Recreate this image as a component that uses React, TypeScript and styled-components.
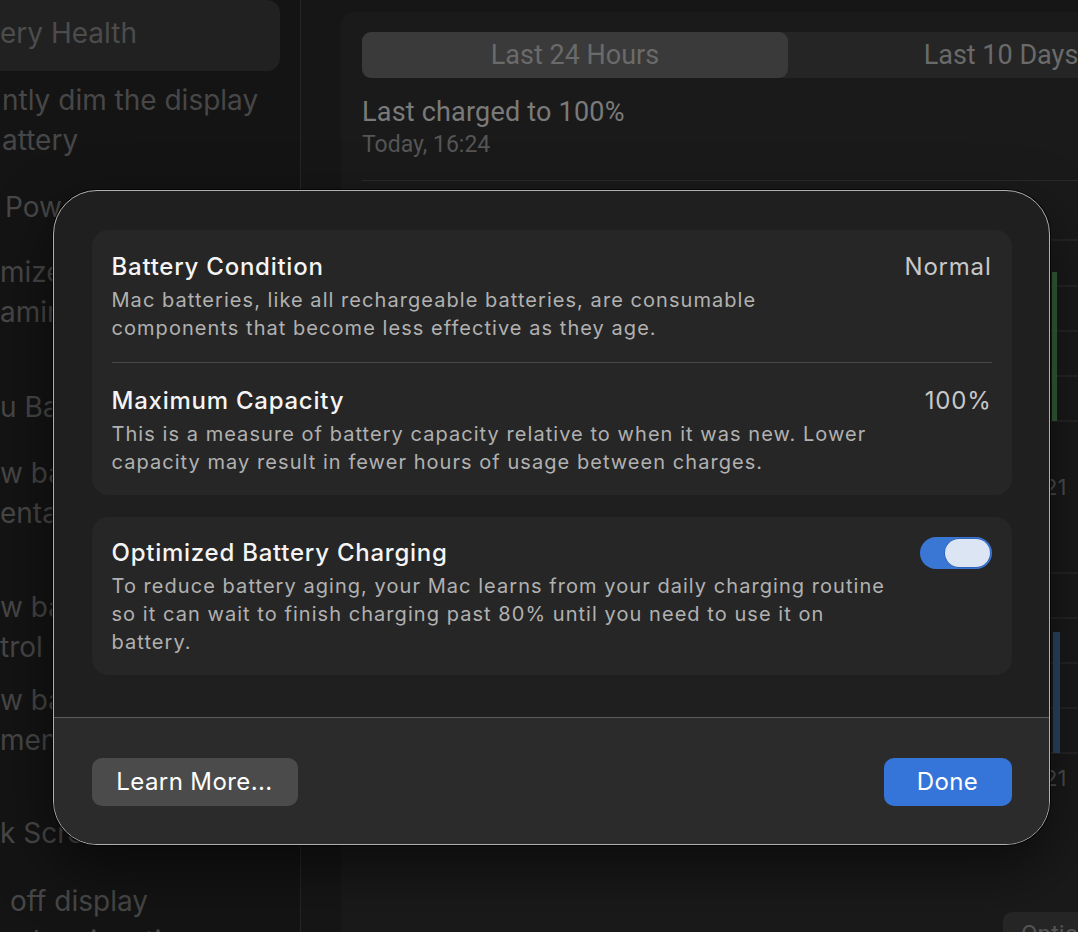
import styled, { createGlobalStyle } from 'styled-components';

const GlobalStyle = createGlobalStyle`
  html, body {
    margin: 0;
    padding: 0;
    background: #161616;
  }
  body {
    font-family: Inter, "Noto Sans", sans-serif;
    -webkit-font-smoothing: antialiased;
  }
`;

const Screen = styled.div`
  position: relative;
  width: 1078px;
  height: 932px;
  overflow: hidden;
  display: flex;
  background: #161616;
`;

/* ---------- dimmed settings window behind the sheet ---------- */

const Sidebar = styled.aside`
  width: 301px;
  flex-shrink: 0;
  box-sizing: border-box;
  padding-right: 20px;
  background: #141414;
  border-right: 1px solid #262626;
  display: flex;
  flex-direction: column;
`;

const SideItem = styled.div<{ $gap: number; $indent?: number; $active?: boolean }>`
  flex-shrink: 0;
  margin-top: ${({ $gap }) => $gap}px;
  padding-left: ${({ $indent }) => $indent ?? 0}px;
  font-size: 28px;
  line-height: 40px;
  color: #474747;
  white-space: nowrap;
  overflow: hidden;
  ${({ $active }) =>
    $active &&
    `
    height: 71px;
    box-sizing: border-box;
    padding-top: 13px;
    background: #212121;
    border-radius: 0 13px 13px 0;
    color: #4c4c4c;
  `}
`;

const Content = styled.main`
  flex: 1;
  min-width: 0;
  padding: 12px 0 0 40px;
  background: #161616;
`;

const Panel = styled.section`
  width: 900px;
  box-sizing: border-box;
  padding: 20px 21px;
  background: #1a1a1a;
  border-radius: 14px;
  font-family: Roboto, "Liberation Sans", sans-serif;
`;

const Segmented = styled.div`
  display: grid;
  grid-template-columns: 1fr 1fr;
  width: 852px;
  height: 46px;
  background: #252525;
  border-radius: 9px;
`;

const Segment = styled.div<{ $active?: boolean }>`
  display: flex;
  align-items: center;
  justify-content: center;
  border-radius: 9px;
  background: ${({ $active }) => ($active ? '#3a3a3a' : 'transparent')};
  color: #6a6a6a;
  font-size: 27px;
`;

const ChargeTitle = styled.div`
  margin-top: 19px;
  font-size: 27px;
  line-height: 30px;
  letter-spacing: 0.2px;
  color: #7a7a7a;
`;

const ChargeTime = styled.div`
  margin-top: 5px;
  font-size: 23px;
  line-height: 26px;
  color: #555555;
`;

const PanelRule = styled.div`
  margin-top: 22px;
  width: 852px;
  height: 1px;
  background: #2a2a2a;
`;

const OptionsButton = styled.div`
  margin: 27px 0 0 641px;
  width: 150px;
  height: 42px;
  padding-left: 18px;
  box-sizing: border-box;
  background: #262626;
  border-radius: 9px;
  color: #555555;
  font-size: 24px;
  line-height: 44px;
`;

/* ---------- battery health sheet ---------- */

const Sheet = styled.div`
  position: absolute;
  left: 53px;
  top: 190px;
  width: 997px;
  box-sizing: border-box;
  background: #1f1f1f;
  border: 1.5px solid #b0b0b0;
  border-radius: 44px;
  overflow: hidden;
  box-shadow: 0 0 0 1px rgba(0, 0, 0, 0.7), 0 24px 60px rgba(0, 0, 0, 0.55);
`;

const SheetBody = styled.div`
  display: flex;
  flex-direction: column;
  gap: 22px;
  padding: 38.5px 37.5px 42px;
`;

const Card = styled.div`
  background: #262626;
  border-radius: 16px;
  padding: 0 20px;
`;

const Row = styled.div<{ $top: number; $bottom: number }>`
  display: flex;
  justify-content: space-between;
  align-items: flex-start;
  gap: 24px;
  padding: ${({ $top, $bottom }) => `${$top}px 0 ${$bottom}px`};
`;

const RowText = styled.div`
  display: flex;
  flex-direction: column;
  gap: 4px;
`;

const Title = styled.div`
  font-size: 24px;
  font-weight: 500;
  line-height: 30px;
  letter-spacing: 0.75px;
  color: #f4f4f4;
`;

const Description = styled.div`
  font-size: 20px;
  line-height: 28px;
  letter-spacing: 1.05px;
  color: #b1b1b1;
  white-space: nowrap;
`;

const Value = styled.div`
  font-size: 24px;
  line-height: 30px;
  letter-spacing: 0.8px;
  color: #c8c8c8;
`;

const CardRule = styled.div`
  height: 1px;
  background: #484848;
`;

const Toggle = styled.div<{ $on: boolean }>`
  flex-shrink: 0;
  margin-top: -1px;
  width: 72px;
  height: 32px;
  box-sizing: border-box;
  padding: 2px;
  border-radius: 16px;
  background: ${({ $on }) => ($on ? '#3a76d4' : '#4a4a4a')};
  display: flex;
  justify-content: ${({ $on }) => ($on ? 'flex-end' : 'flex-start')};
`;

const Knob = styled.div`
  width: 45px;
  height: 28px;
  border-radius: 14px;
  background: #dce5f3;
  box-shadow: 0 0 0 0.5px rgba(20, 50, 110, 0.5);
`;

const Footer = styled.div`
  display: flex;
  justify-content: space-between;
  align-items: center;
  padding: 40px 37.5px 38.5px;
  background: #2b2b2b;
  border-top: 1.5px solid #5b5b5b;
`;

const Button = styled.button<{ $primary?: boolean }>`
  height: 48px;
  width: ${({ $primary }) => ($primary ? '128px' : '206px')};
  border: none;
  border-radius: 10px;
  background: ${({ $primary }) => ($primary ? '#3574d9' : '#4b4b4b')};
  color: #ffffff;
  font-family: Inter, "Noto Sans", sans-serif;
  font-size: 24px;
  font-weight: 400;
  letter-spacing: 0.4px;
  padding: 0;
`;

const sideItems = [
  { gap: 9, indent: 2, lines: ['ntly dim the display', 'attery'] },
  { gap: 27, indent: 5, lines: ['Power Mode'] },
  { gap: 25, indent: 0, lines: ['mize video streaming', 'aming on battery'] },
  { gap: 55, indent: 0, lines: ['u Bar'] },
  { gap: 26, indent: 0, lines: ['w battery percentage', 'entage'] },
  { gap: 54, indent: 0, lines: ['w battery in Control', 'trol Center'] },
  { gap: 13, indent: 0, lines: ['w battery in', 'ment'] },
  { gap: 53, indent: 0, lines: ['k Screen'] },
  { gap: 28, indent: 10, lines: ['off display', 'when inactive'] },
];

const gridTop = [59, 105, 150, 195, 240];
const gridBottom = [392, 437, 482, 527, 572];

export default function App() {
  return (
    <>
      <GlobalStyle />
      <Screen>
        <Sidebar>
          <SideItem $gap={0} $active>
            ery Health
          </SideItem>
          {sideItems.map((item, i) => (
            <SideItem key={i} $gap={item.gap} $indent={item.indent}>
              {item.lines.map((l, j) => (
                <div key={j}>{l}</div>
              ))}
            </SideItem>
          ))}
        </Sidebar>

        <Content>
          <Panel>
            <Segmented>
              <Segment $active>Last 24 Hours</Segment>
              <Segment>Last 10 Days</Segment>
            </Segmented>
            <ChargeTitle>Last charged to 100%</ChargeTitle>
            <ChargeTime>Today, 16:24</ChargeTime>
            <PanelRule />
            <svg width="852" height="700" viewBox="0 0 852 700">
              {[...gridTop, ...gridBottom].map((y) => (
                <line key={y} x1="0" x2="852" y1={y} y2={y} stroke="#2a2a2a" strokeWidth="1.5" />
              ))}
              <rect x="690" y="91" width="5" height="149" fill="#36603a" />
              <rect x="691" y="451" width="7" height="121" fill="#2c4867" />
              <text x="682" y="314" fill="#4f4f4f" fontSize="22" fontFamily="Inter, sans-serif">21</text>
              <text x="682" y="605" fill="#4f4f4f" fontSize="22" fontFamily="Inter, sans-serif">21</text>
            </svg>
            <OptionsButton>Options...</OptionsButton>
          </Panel>
        </Content>

        <Sheet>
          <SheetBody>
            <Card>
              <Row $top={22} $bottom={20}>
                <RowText>
                  <Title>Battery Condition</Title>
                  <Description>
                    Mac batteries, like all rechargeable batteries, are consumable
                    <br />
                    components that become less effective as they age.
                  </Description>
                </RowText>
                <Value>Normal</Value>
              </Row>
              <CardRule />
              <Row $top={23} $bottom={19}>
                <RowText>
                  <Title>Maximum Capacity</Title>
                  <Description>
                    This is a measure of battery capacity relative to when it was new. Lower
                    <br />
                    capacity may result in fewer hours of usage between charges.
                  </Description>
                </RowText>
                <Value>100%</Value>
              </Row>
            </Card>
            <Card>
              <Row $top={21} $bottom={19}>
                <RowText>
                  <Title>Optimized Battery Charging</Title>
                  <Description>
                    To reduce battery aging, your Mac learns from your daily charging routine
                    <br />
                    so it can wait to finish charging past 80% until you need to use it on
                    <br />
                    battery.
                  </Description>
                </RowText>
                <Toggle $on>
                  <Knob />
                </Toggle>
              </Row>
            </Card>
          </SheetBody>
          <Footer>
            <Button>Learn More...</Button>
            <Button $primary>Done</Button>
          </Footer>
        </Sheet>
      </Screen>
    </>
  );
}
